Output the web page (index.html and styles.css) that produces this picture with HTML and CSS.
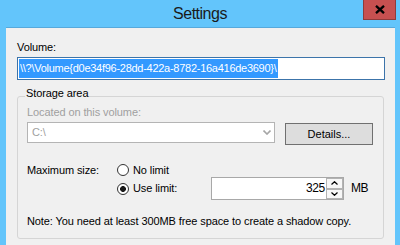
FILE: index.html
```
<!DOCTYPE html>
<html>
<head>
<meta charset="utf-8">
<title>Settings</title>
<link rel="stylesheet" href="styles.css">
</head>
<body>
<div class="window">
  <div class="titlebar">
    <h1 class="title">Settings</h1>
    <button class="close" aria-label="Close">
      <svg width="10" height="9" viewBox="0 0 10 9"><path d="M1 0.8 L9 8.2 M9 0.8 L1 8.2" stroke="#000" stroke-width="2.3" fill="none"/></svg>
    </button>
  </div>
  <div class="client">
    <div class="field-label">Volume:</div>
    <div class="volbox"><span class="sel">\\?\Volume{d0e34f96-28dd-422a-8782-16a416de3690}\</span></div>
    <fieldset class="group">
      <legend>Storage area</legend>
      <div class="muted">Located on this volume:</div>
      <div class="combo-row">
        <div class="combo">
          <span>C:\</span>
          <svg class="chev" width="8" height="5" viewBox="0 0 8 5"><path d="M0.5 0.5 L4 4 L7.5 0.5" stroke="#a6a6a6" stroke-width="1.6" fill="none"/></svg>
        </div>
        <button class="btn">Details...</button>
      </div>
      <div class="size-grid">
        <span class="size-label">Maximum size:</span>
        <label class="radio"><span class="dot"></span>No limit</label>
        <label class="radio row2"><span class="dot checked"></span>Use limit:</label>
        <div class="spin">
          <span class="spin-value">325</span>
          <div class="spin-btns">
            <span class="spin-btn"><svg width="7" height="4" viewBox="0 0 7 4"><path d="M0.5 3.5 L3.5 0.7 L6.5 3.5" stroke="#000" stroke-width="1.2" fill="none"/></svg></span>
            <span class="spin-btn"><svg width="7" height="4" viewBox="0 0 7 4"><path d="M0.5 0.5 L3.5 3.3 L6.5 0.5" stroke="#000" stroke-width="1.2" fill="none"/></svg></span>
          </div>
        </div>
        <span class="unit">MB</span>
      </div>
      <p class="note">Note: You need at least 300MB free space to create a shadow copy.</p>
    </fieldset>
  </div>
</div>
</body>
</html>
```
FILE: styles.css
```
html, body {
  margin: 0;
  padding: 0;
}
body {
  width: 400px;
  height: 245px;
  overflow: hidden;
  background: #63c5fb;
  font: 11px/13px "Liberation Sans", Arial, sans-serif;
  letter-spacing: -0.1px;
  color: #000;
}
.titlebar {
  display: grid;
  grid-template-columns: 1fr auto 1fr;
  height: 27px;
}
.title {
  grid-column: 2;
  margin: 0;
  font-weight: normal;
  font-size: 16px;
  line-height: 27px;
  letter-spacing: -0.5px;
  color: #1a1a1a;
}
.close {
  grid-column: 3;
  justify-self: end;
  align-self: start;
  width: 33px;
  height: 20px;
  margin-right: 4px;
  padding: 0;
  box-sizing: border-box;
  border: 1px solid #8e3b3b;
  border-top: none;
  background: #c75050;
  display: flex;
  align-items: center;
  justify-content: center;
}
.client {
  margin-left: 6px;
  width: 389px;
  height: 218px;
  box-sizing: border-box;
  overflow: hidden;
  background: #f0f0f0;
  border-top: 1px solid #56a9dc;
  padding: 13px 10px 0 11px;
}
.field-label {
  line-height: 13px;
}
.volbox {
  margin-top: 3px;
  height: 23px;
  box-sizing: border-box;
  border: 1px solid #3c74aa;
  background: #fff;
  padding: 1px;
  display: flex;
}
.sel {
  background: #3399ff;
  color: #fff;
  line-height: 19px;
  padding: 0 1px;
  letter-spacing: -0.27px;
  white-space: nowrap;
}
.group {
  margin: 7px 1px 0 0;
  padding: 0 9px 10px 9px;
  border: 1px solid #d5d5d5;
  border-radius: 3px;
  min-width: 0;
}
.group legend {
  margin-left: -2px;
  padding: 0 1px 7px;
  line-height: 12px;
}
.muted {
  color: #a0a0a0;
  line-height: 13px;
}
.combo-row {
  display: flex;
  gap: 10px;
  margin-top: 3px;
  align-items: flex-start;
}
.combo {
  width: 248px;
  height: 21px;
  box-sizing: border-box;
  border: 1px solid #b4b4b4;
  background: #fff;
  color: #a0a0a0;
  display: flex;
  align-items: center;
  justify-content: space-between;
  padding: 0 3px 0 4px;
}
.btn {
  margin-top: 1px;
  width: 88px;
  height: 22px;
  box-sizing: border-box;
  border: 1px solid #707070;
  background: #dddddd;
  font: inherit;
  color: #000;
  padding: 0;
}
.size-grid {
  display: grid;
  grid-template-columns: 90px 94px 133px auto;
  grid-template-rows: 14px 23px;
  margin-top: 18px;
  align-items: center;
}
.size-label {
  grid-column: 1;
  grid-row: 1;
}
.radio {
  display: flex;
  align-items: center;
  gap: 4px;
  grid-column: 2;
  grid-row: 1;
}
.radio.row2 {
  grid-row: 2;
}
.dot {
  width: 12px;
  height: 12px;
  box-sizing: border-box;
  border: 1px solid #333;
  border-radius: 50%;
  background: #fff;
}
.dot.checked {
  background: radial-gradient(circle, #1a1a1a 0 2.6px, #fff 3.2px);
}
.spin {
  grid-column: 3;
  grid-row: 2;
  display: flex;
  height: 23px;
  box-sizing: border-box;
  border: 1px solid #a8a8a8;
  background: #fff;
}
.spin-value {
  flex: 1;
  text-align: right;
  padding-right: 1px;
  line-height: 21px;
  font-size: 12px;
  letter-spacing: -0.3px;
}
.spin-btns {
  display: flex;
  flex-direction: column;
  width: 17px;
}
.spin-btn {
  flex: 1;
  box-sizing: border-box;
  border: 1px solid #b3b3b3;
  background: #f7f7f7;
  display: flex;
  align-items: center;
  justify-content: center;
}
.unit {
  grid-column: 4;
  grid-row: 2;
  padding-left: 7px;
  font-size: 12px;
  letter-spacing: -0.6px;
}
.note {
  margin: 15px 0 0;
  line-height: 13px;
  white-space: nowrap;
}
```
